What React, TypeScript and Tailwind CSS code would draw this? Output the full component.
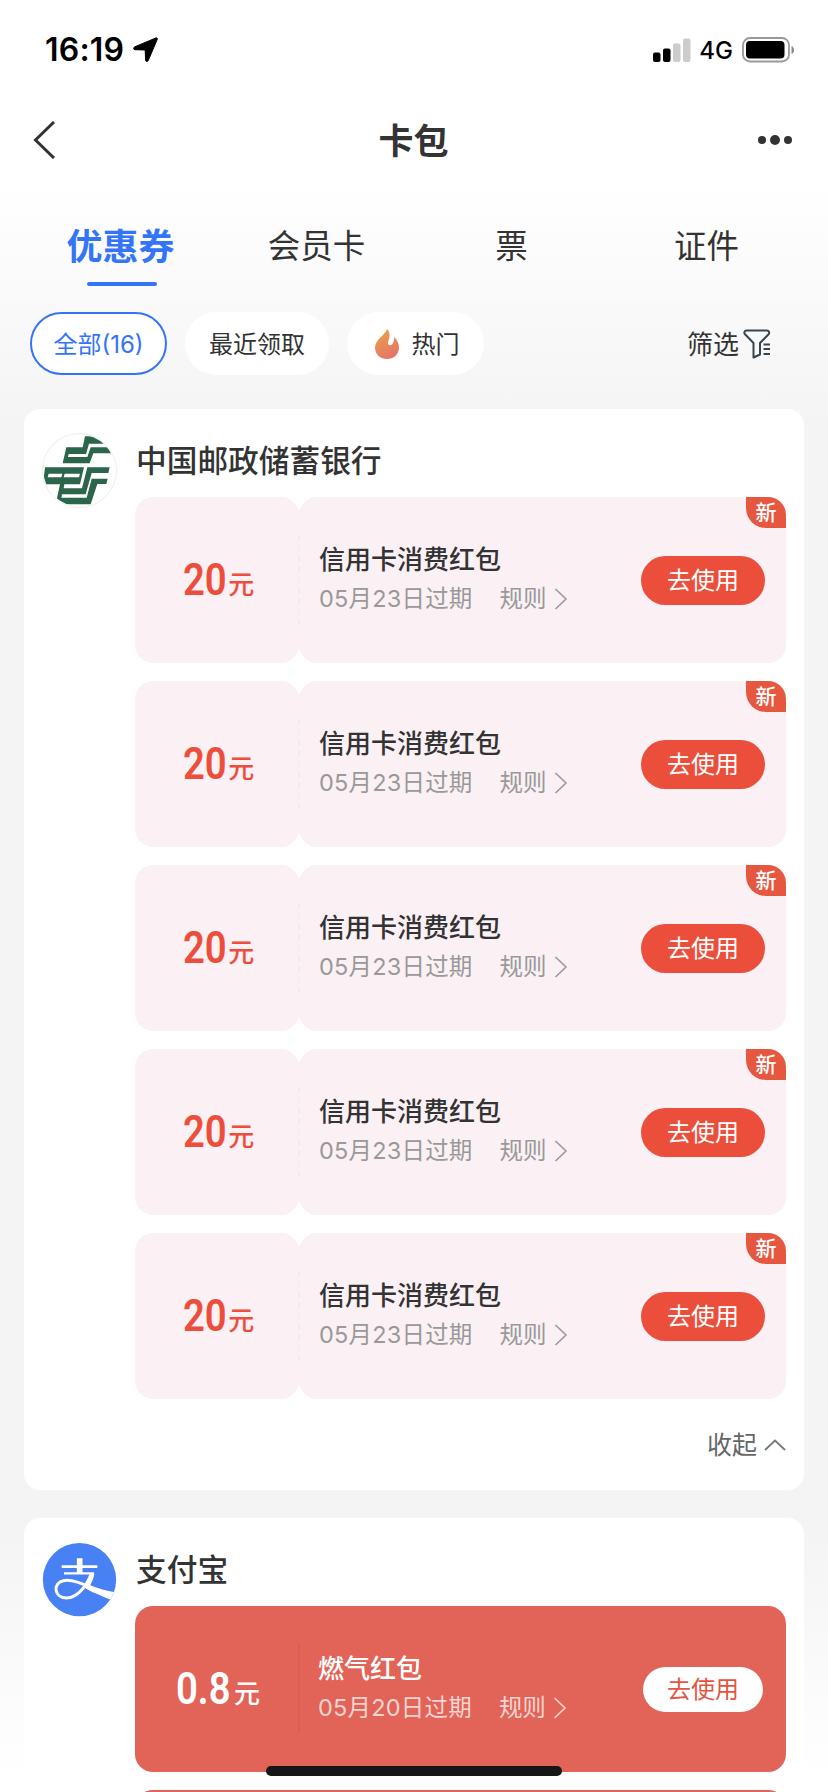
import React from "react";
import { clsx } from "clsx";

type Tone = "light" | "solid";

interface Coupon {
  amount: string;
  title: string;
  expires: string;
  isNew?: boolean;
}

const tabs = ["优惠券", "会员卡", "票", "证件"];

const bankCoupons: Coupon[] = Array.from({ length: 5 }, () => ({
  amount: "20",
  title: "信用卡消费红包",
  expires: "05月23日过期",
  isNew: true,
}));

const alipayCoupons: Coupon[] = [{ amount: "0.8", title: "燃气红包", expires: "05月20日过期" }];

const StatusBar = () => (
  <div className="flex h-[99px] shrink-0 items-center justify-between pl-[45px] pr-[34px] text-black">
    <div className="flex items-center">
      <span className="text-[32px] font-semibold leading-none tracking-[0.2px]">16:19</span>
      <svg className="ml-[9px]" width="25" height="25" viewBox="0 0 25 25">
        <path
          d="M23 .9 1.600 9.900c-1.500.7-1.200 2.700.3 2.800l10.300.3.4 10.200c.1 1.600 2 1.800 2.600.4L24.300 2.200c.3-.9-.4-1.600-1.300-1.300Z"
          fill="#000"
          stroke="#000"
          strokeWidth="1"
        />
      </svg>
    </div>
    <div className="flex items-center">
      <svg width="38" height="24" viewBox="0 0 38 24">
        <rect x="0" y="14.500" width="7.500" height="9.500" rx="2" fill="#000" />
        <rect x="10" y="10.500" width="7.500" height="13.500" rx="2" fill="#000" />
        <rect x="20" y="5.500" width="7.500" height="18.500" rx="2" fill="#ccc" />
        <rect x="30" y="0.500" width="7.500" height="23.500" rx="2" fill="#ccc" />
      </svg>
      <span className="ml-2 mt-[3px] text-[24px] font-medium leading-none">4G</span>
      <svg className="ml-[9px]" width="52" height="26" viewBox="0 0 52 26">
        <rect x="1" y="1" width="46" height="23.500" rx="7" fill="none" stroke="#999" strokeWidth="1.800" />
        <rect x="4" y="4" width="38.500" height="17.500" rx="4" fill="#000" />
        <path d="M49.500 9c3.400 1.500 3.400 6.500 0 8Z" fill="#8a8a8a" />
      </svg>
    </div>
  </div>
);

const Header = () => (
  <div className="flex h-[82px] shrink-0 items-center justify-between pl-[33px] pr-[36px]">
    <svg width="24" height="38" viewBox="0 0 24 38" fill="none">
      <path d="M21 1 2.500 19 21 37" stroke="#333" strokeWidth="3" />
    </svg>
    <h1 className="pl-[12px] pt-[2px] text-[35px] font-bold leading-none text-[#333]">卡包</h1>
    <svg width="34" height="12" viewBox="0 0 34 12" fill="#333">
      <circle cx="4" cy="6" r="4" />
      <circle cx="17" cy="6" r="5" />
      <circle cx="30" cy="6" r="4" />
    </svg>
  </div>
);

const Tabs = () => (
  <div className="grid h-[105px] shrink-0 grid-cols-4 px-6">
    {tabs.map((tab, i) => (
      <div key={tab} className="flex flex-col items-center justify-between pt-[42px]">
        <span
          className={clsx(
            "flex h-12 items-center leading-none",
            i === 0 ? "-ml-[2px] text-[36px] font-bold text-[#3375f6]" : "text-[32.5px] text-[#333]",
          )}
        >
          {tab}
        </span>
        {i === 0 && <div className="h-1 w-[70px] rounded-full bg-[#3375f6]" />}
      </div>
    ))}
  </div>
);

const FlameIcon = () => (
  <svg width="24" height="30" viewBox="0 0 24 30">
    <defs>
      <linearGradient id="flame" x1="0" y1="0" x2="0.5" y2="1">
        <stop offset="0" stopColor="#ecab4c" />
        <stop offset="0.500" stopColor="#e98d55" />
        <stop offset="1" stopColor="#e47668" />
      </linearGradient>
    </defs>
    <path
      d="M12 0C11 5.500 0 10.500 0 18.500 0 25.500 5.500 30 12 30s12-4.500 12-11.500c0-4-1.800-7.500-5-10.500.2 4.500-1 8-3.800 8.200-2.600.1-2.600-2.400-1.700-4.700C14.800 7.800 15.500 3.500 12 0Z"
      fill="url(#flame)"
    />
  </svg>
);

const FunnelIcon = () => (
  <svg className="-mt-[2px] ml-1" width="28" height="30" viewBox="0 0 28 30" fill="none" stroke="#39454c" strokeWidth="2">
    <path
      d="M3.500 1.500h20.500c2 0 2.800 2.200 1.600 3.800L17 14v11.500l-6.500 3V14L2 5.300C.7 3.700 1.500 1.500 3.500 1.500Z"
      strokeLinejoin="round"
    />
    <path d="M20.500 15.500h6.500M20.500 20h6.500M20.500 25h6.500" />
  </svg>
);

const Filters = () => (
  <div className="mt-[26px] flex h-[63px] shrink-0 items-center pl-[30px] pr-[57px] text-[24px] leading-none text-[#333]">
    <div className="flex h-full w-[137px] items-center justify-center rounded-full border-2 border-[#3375f6] bg-white pt-[2px] text-[#3375f6]">
      全部(16)
    </div>
    <div className="ml-[18px] flex h-full w-[144px] items-center justify-center rounded-full bg-white pt-[2px]">
      最近领取
    </div>
    <div className="ml-[18px] flex h-full w-[137px] items-center justify-center gap-[13px] rounded-full bg-white pl-[3px]">
      <FlameIcon />
      <span className="pt-[2px]">热门</span>
    </div>
    <div className="ml-auto flex items-center pt-[2px] text-[26px]">
      筛选
      <FunnelIcon />
    </div>
  </div>
);

const PostBankLogo = () => (
  <svg width="75" height="75" viewBox="38 38 225 225">
    <defs>
      <clipPath id="bank-clip">
        <circle cx="150.500" cy="150.500" r="108" />
      </clipPath>
    </defs>
    <circle cx="150.500" cy="150.500" r="111" fill="#fff" stroke="#ececec" strokeWidth="3" />
    <g clipPath="url(#bank-clip)" fill="#2b664a">
      <path d="M111 81H160L167 48H230V70H179L170 101H118L116 110H174L184 81H260V99H192L181 129H100Z" />
      <path d="M47 141H164L152 192H105L103 204H158L174 141H241L237 158H187L169 222H98L96 232H172L187 175H235L231 191H204L184 252H79L92 192H41Z" />
      <path d="M58 160H99L96 171H55ZM106 160H152L149 171H103Z" fill="#fff" />
    </g>
  </svg>
);

const AlipayLogo = () => (
  <svg className="mt-px" width="75" height="75" viewBox="36 38 225 225">
    <defs>
      <clipPath id="alipay-clip">
        <circle cx="148.500" cy="148" r="110" />
      </clipPath>
    </defs>
    <circle cx="148.500" cy="148" r="110" fill="#4881f3" />
    <g clipPath="url(#alipay-clip)" fill="none" stroke="#fff">
      <path d="M149 84V130" strokeWidth="17" />
      <path d="M95 109H202" strokeWidth="8" />
      <path d="M102 129H192" strokeWidth="7" />
      <path d="M184 129C174 160 145 202 110 203 72 203 67 158 100 151 122 146 158 160 182 172" strokeWidth="9" />
      <path d="M187 129C184 144 178 158 170 169" strokeWidth="13" />
      <path d="M166 158C192 170 222 181 262 187L250 212C220 198 186 187 160 170Z" fill="#fff" stroke="none" />
    </g>
  </svg>
);

const CouponCard = ({ coupon, tone }: { coupon: Coupon; tone: Tone }) => {
  const light = tone === "light";
  return (
    <div className={clsx("relative flex h-[166px] shrink-0", !light && "rounded-[18px] bg-[#e26458]")}>
      <div
        className={clsx(
          "flex items-baseline justify-center pl-[3px] pt-[59px]",
          light ? "w-[164px] rounded-[18px] bg-[#fbf0f4] text-[#eb4f3c]" : "w-[163px] text-white",
        )}
      >
        <span className="-mr-[6px] inline-block origin-left scale-x-[0.88] font-[Roboto] text-[43.5px] font-semibold leading-[50px]">
          {coupon.amount}
        </span>
        <span className="relative -top-px ml-[2px] text-[26px] font-medium leading-none">元</span>
      </div>
      {/* perforation between the amount and the details */}
      {light ? (
        <div className="absolute left-[163px] top-[38px] h-[90px] border-l-2 border-dashed border-[#f9eaef]" />
      ) : (
        <div className="mt-[37px] h-[90px] w-[2px] bg-[#dc5d51]" />
      )}
      <div
        className={clsx(
          "flex flex-1 items-center",
          light ? "rounded-[18px] bg-[#fbf0f4] pl-[20px] pr-[21px]" : "pl-[18px] pr-[23px]",
        )}
      >
        <div className="flex-1">
          <div className={clsx("-mt-[2px] text-[26px] font-medium leading-[40px]", light ? "text-[#333]" : "text-white")}>
            {coupon.title}
          </div>
          <div className={clsx("flex items-center text-[23.5px] leading-[38px]", light ? "text-[#999]" : "text-[#f8d4d0]")}>
            <span className="tracking-[0.2px]">{coupon.expires}</span>
            <span className="ml-[27px]">规则</span>
            <svg className="ml-[7px]" width="14" height="22" viewBox="0 0 14 22" fill="none">
              <path d="M1.500 1 12 11 1.500 21" stroke="currentColor" strokeWidth="1.600" />
            </svg>
          </div>
        </div>
        <button
          className={clsx(
            "flex items-center justify-center rounded-full pt-[2px] text-[24px] leading-none",
            light ? "h-[49px] w-[124px] bg-[#eb4f3c] text-white" : "h-[45px] w-[120px] bg-white text-[#e35541]",
          )}
        >
          去使用
        </button>
      </div>
      {coupon.isNew && (
        <span className="absolute right-0 top-0 flex h-[31px] w-10 items-center justify-center rounded-bl-[20px] rounded-tr-[18px] bg-[#e5573f] text-[21px] font-medium leading-none text-white">
          新
        </span>
      )}
    </div>
  );
};

interface MerchantCardProps {
  name: string;
  logo: React.ReactNode;
  coupons: Coupon[];
  tone: Tone;
  children?: React.ReactNode;
}

const MerchantCard = ({ name, logo, coupons, tone, children }: MerchantCardProps) => (
  <section className="flex shrink-0 items-start gap-[18px] rounded-[16px] bg-white px-[18px] pt-6">
    {logo}
    <div className="flex flex-1 flex-col">
      <h2 className="mb-2 flex h-14 items-center pl-px pt-px text-[30.7px] font-medium leading-none text-[#333]">{name}</h2>
      <div className="flex flex-col gap-[18px]">
        {coupons.map((coupon, i) => (
          <CouponCard key={i} coupon={coupon} tone={tone} />
        ))}
      </div>
      {children}
    </div>
  </section>
);

export default function App() {
  return (
    <div
      lang="zh-CN"
      className="relative flex h-[1792px] w-[828px] flex-col overflow-hidden bg-[linear-gradient(to_bottom,#fff_180px,#f4f4f4_430px,#f4f4f4_1530px,#fff_1780px)] font-[Inter,'Noto_Sans_CJK_SC',sans-serif]"
    >
      <StatusBar />
      <Header />
      <Tabs />
      <Filters />
      <main className="mt-[34px] flex shrink-0 flex-col gap-7 px-6">
        <MerchantCard name="中国邮政储蓄银行" logo={<PostBankLogo />} coupons={bankCoupons} tone="light">
          <div className="flex h-[91px] items-center justify-end text-[25px] leading-none text-[#666]">
            <span className="pt-[2px]">收起</span>
            <svg className="ml-[7px]" width="22" height="14" viewBox="0 0 22 14" fill="none">
              <path d="M1 12 11 2.500 21 12" stroke="#777" strokeWidth="1.800" />
            </svg>
          </div>
        </MerchantCard>
        <MerchantCard name="支付宝" logo={<AlipayLogo />} coupons={alipayCoupons} tone="solid">
          {/* top edge of the next coupon */}
          <div className="mt-[18px] h-[166px] rounded-[18px] bg-[#e26458]" />
        </MerchantCard>
      </main>
      {/* home indicator */}
      <div className="absolute bottom-4 left-[266px] h-[10px] w-[296px] rounded-full bg-[#161616]" />
    </div>
  );
}
